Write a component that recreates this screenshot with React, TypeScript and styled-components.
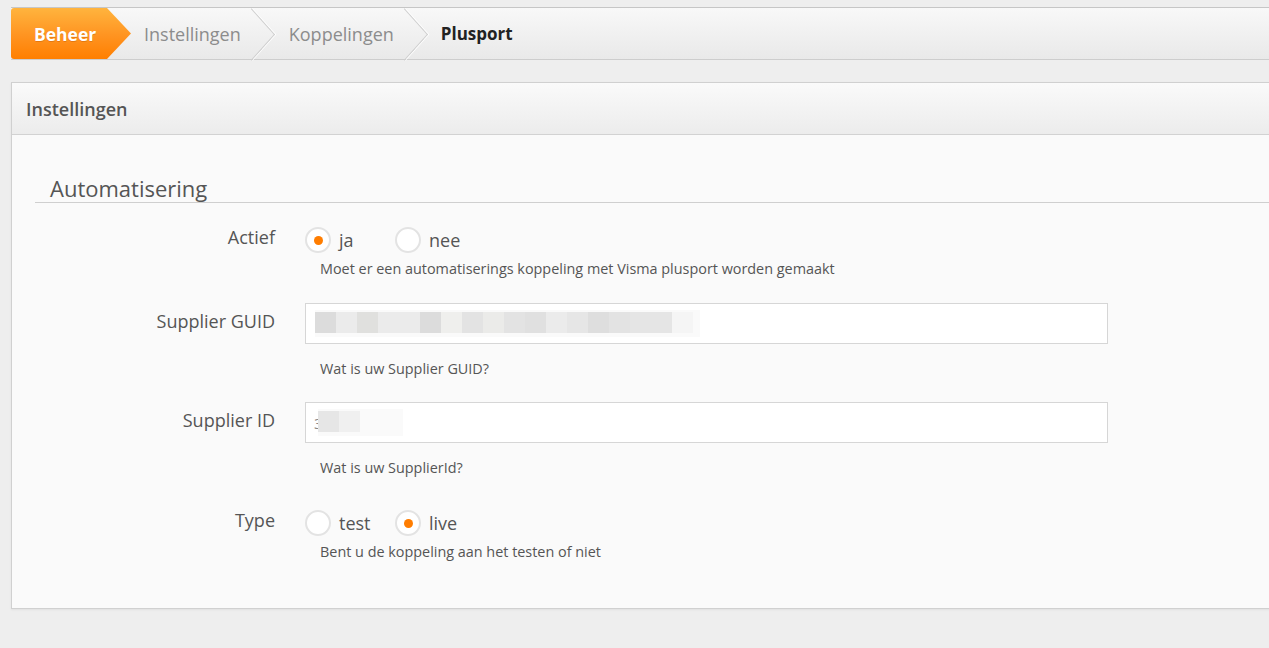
import * as React from 'react';
import styled, { createGlobalStyle } from 'styled-components';

const GlobalStyle = createGlobalStyle`
  html, body {
    margin: 0;
    padding: 0;
    background: #eeeeee;
    font-family: "Open Sans", "Liberation Sans", sans-serif;
    overflow: hidden;
  }
`;

const Page = styled.div`
  padding: 7px 0 40px 11px;
  width: 1290px;
`;

// breadcrumb bar
const Crumbs = styled.nav`
  display: flex;
  align-items: stretch;
  height: 51px;
  border-top: 1px solid #c6c6c6;
  border-bottom: 1px solid #cdcdcd;
  background: linear-gradient(#f8f8f8, #e9e9e9);
`;

const HomeCrumb = styled.a`
  display: flex;
  align-items: center;
  box-sizing: border-box;
  width: 120px;
  padding-left: 23px;
  font-size: 17.5px;
  font-weight: 700;
  color: #fff;
  background: linear-gradient(#ffb43e, #ff9320 55%, #ff7f00);
  border-radius: 3px 0 0 3px;
  clip-path: polygon(0 0, calc(100% - 24px) 0, 100% 50%, calc(100% - 24px) 100%, 0 100%);
  text-shadow: 0 1px 0 rgba(180, 80, 0, 0.35);
`;

const Crumb = styled.a<{ $current?: boolean; $first?: boolean }>`
  position: relative;
  display: flex;
  align-items: center;
  margin-left: ${(p) => (p.$first ? '-24px' : '0')};
  padding: 0 11px 0 ${(p) => (p.$current ? '36px' : '37px')};
  font-size: ${(p) => (p.$current ? '17px' : '18px')};
  font-weight: ${(p) => (p.$current ? 700 : 400)};
  color: ${(p) => (p.$current ? '#222' : '#8c8c8c')};

  ${(p) =>
    !p.$current &&
    `
    &::after {
      content: '';
      position: absolute;
      top: 50%;
      right: -18px;
      width: 36px;
      height: 36px;
      margin-top: -18px;
      border-top: 1px solid #cfcfcf;
      border-right: 1px solid #cfcfcf;
      box-shadow: 1px -1px 0 rgba(255, 255, 255, 0.9);
      transform: scale(0.9, 1) rotate(45deg);
    }
  `}
`;

// settings panel
const Panel = styled.section`
  margin-top: 22px;
  border: 1px solid #d0d0d0;
  background: #fafafa;
  box-shadow: 0 1px 2px rgba(0, 0, 0, 0.06);
`;

const PanelHeader = styled.header`
  display: flex;
  align-items: center;
  height: 51px;
  padding: 0 14px;
  border-bottom: 1px solid #d2d2d2;
  background: linear-gradient(#fafafa, #ececec);
  font-size: 18px;
  font-weight: 600;
  color: #555;
`;

const PanelBody = styled.div`
  padding: 39px 0 46px 23px;
`;

const SectionTitle = styled.h2`
  margin: 0 0 22px;
  padding-left: 15px;
  font-size: 22px;
  line-height: 28px;
  font-weight: 400;
  color: #555;
  border-bottom: 1px solid #cfcfcf;
`;

const Row = styled.div<{ $radio?: boolean }>`
  display: grid;
  grid-template-columns: 240px 1fr;
  column-gap: 30px;
  padding: ${(p) => (p.$radio ? '7px 0 1px' : '0')};
  margin-bottom: 24px;

  &:first-of-type {
    padding-top: 0;
  }

  &:last-child {
    margin-bottom: 0;
  }
`;

const Label = styled.label<{ $radio?: boolean }>`
  text-align: right;
  font-size: 18px;
  line-height: 24px;
  color: #555;
  padding-top: ${(p) => (p.$radio ? '0' : '6px')};
`;

const Controls = styled.div`
  display: flex;
  flex-direction: column;
`;

const RadioGroup = styled.div`
  display: flex;
  margin-top: 2px;
`;

const Option = styled.span`
  display: flex;
  align-items: center;
  min-width: 90px;
  height: 26px;
  font-size: 18px;
  color: #555;
`;

const RadioDot = styled.span<{ $checked?: boolean }>`
  position: relative;
  width: 22px;
  height: 22px;
  margin-right: 8px;
  border: 2px solid #e3e3e3;
  border-radius: 50%;
  background: #fff;

  &::after {
    content: '';
    display: ${(p) => (p.$checked ? 'block' : 'none')};
    position: absolute;
    top: 50%;
    left: 50%;
    width: 9px;
    height: 9px;
    margin: -4.5px 0 0 -4.5px;
    border-radius: 50%;
    background: #ff7d00;
  }
`;

const Help = styled.p<{ $radio?: boolean }>`
  margin: ${(p) => (p.$radio ? '7px' : '16px')} 0 0 15px;
  font-size: 14.4px;
  line-height: 18px;
  color: #555;
`;

const Field = styled.div`
  display: flex;
  align-items: center;
  box-sizing: border-box;
  width: 803px;
  height: 41px;
  padding: 0 8px;
  border: 1px solid #d6d6d6;
  background: #fff;
  font-size: 15px;
  color: #888;
`;

const Masked = styled.span<{ $pull?: number }>`
  display: flex;
  padding: 2px 7px 4px 0;
  margin-left: ${(p) => (p.$pull ? `-${p.$pull}px` : '1px')};
  background: #fafafa;
`;

const Cell = styled.span<{ $tone: string }>`
  width: 21px;
  height: 21px;
  background: ${(p) => p.$tone};
`;

const Spacer = styled.span`
  width: 36px;
`;

const guidTones = [
  '#dcdcdc', '#ebebeb', '#e0e0de', '#ebebeb', '#ebebeb', '#dcdcdc',
  '#efefed', '#e3e3e3', '#ebebe9', '#e3e3e3', '#e0e0e0', '#ebebeb',
  '#e6e6e6', '#dedede', '#e3e3e3', '#e5e5e5', '#e5e5e5', '#f5f5f5'
];

const idTones = ['#e6e6e6', '#f0f0f0'];

type Choice = { value: string; checked?: boolean };

const Radios = ({ options }: { options: Choice[] }) => (
  <RadioGroup>
    {options.map((o) => (
      <Option key={o.value}>
        <RadioDot $checked={o.checked} />
        {o.value}
      </Option>
    ))}
  </RadioGroup>
);

export default function App() {
  return (
    <Page>
      <GlobalStyle />
      <Crumbs>
        <HomeCrumb>Beheer</HomeCrumb>
        <Crumb $first>Instellingen</Crumb>
        <Crumb>Koppelingen</Crumb>
        <Crumb $current>Plusport</Crumb>
      </Crumbs>

      <Panel>
        <PanelHeader>Instellingen</PanelHeader>
        <PanelBody>
          <SectionTitle>Automatisering</SectionTitle>

          <Row $radio>
            <Label $radio>Actief</Label>
            <Controls>
              <Radios options={[{ value: 'ja', checked: true }, { value: 'nee' }]} />
              <Help $radio>Moet er een automatiserings koppeling met Visma plusport worden gemaakt</Help>
            </Controls>
          </Row>

          <Row>
            <Label>Supplier GUID</Label>
            <Controls>
              <Field>
                <Masked>
                  {guidTones.map((t, i) => (
                    <Cell key={i} $tone={t} />
                  ))}
                </Masked>
              </Field>
              <Help>Wat is uw Supplier GUID?</Help>
            </Controls>
          </Row>

          <Row>
            <Label>Supplier ID</Label>
            <Controls>
              <Field>
                3
                <Masked $pull={5}>
                  {idTones.map((t, i) => (
                    <Cell key={i} $tone={t} />
                  ))}
                  <Spacer />
                </Masked>
              </Field>
              <Help>Wat is uw SupplierId?</Help>
            </Controls>
          </Row>

          <Row $radio>
            <Label $radio>Type</Label>
            <Controls>
              <Radios options={[{ value: 'test' }, { value: 'live', checked: true }]} />
              <Help $radio>Bent u de koppeling aan het testen of niet</Help>
            </Controls>
          </Row>
        </PanelBody>
      </Panel>
    </Page>
  );
}
